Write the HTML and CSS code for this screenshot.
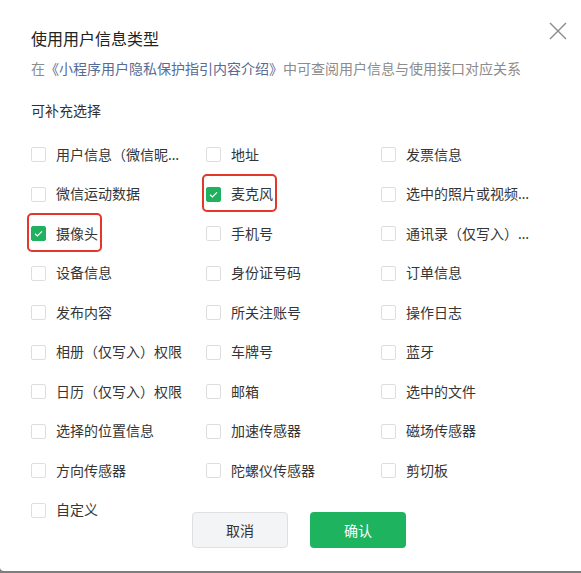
FILE: index.html
```html
<!DOCTYPE html>
<html lang="zh-CN">
<head>
<meta charset="utf-8">
<title>使用用户信息类型</title>
<link rel="stylesheet" href="styles.css">
</head>
<body>
<div class="dialog">
  <div class="header">
    <h1 class="title">使用用户信息类型</h1>
    <span class="close" aria-label="关闭">
      <svg width="18" height="18" viewBox="0 0 18 18"><path d="M1 1 L17 17 M17 1 L1 17" stroke="#8a8a8a" stroke-width="1.4" fill="none"/></svg>
    </span>
  </div>
  <p class="desc">在<a class="link">《小程序用户隐私保护指引内容介绍》</a>中可查阅用户信息与使用接口对应关系</p>
  <p class="section">可补充选择</p>
  <div class="grid">
    <label class="item"><span class="box"></span><span class="text">用户信息（微信昵称、头像）</span></label>
    <label class="item"><span class="box"></span><span class="text">地址</span></label>
    <label class="item"><span class="box"></span><span class="text">发票信息</span></label>

    <label class="item"><span class="box"></span><span class="text">微信运动数据</span></label>
    <label class="item marked"><span class="box checked"><svg width="15" height="15" viewBox="0 0 15 15"><path d="M4 7.8 L6.4 10 L11 5.3" stroke="#fff" stroke-width="1.2" fill="none"/></svg></span><span class="text">麦克风</span></label>
    <label class="item"><span class="box"></span><span class="text">选中的照片或视频信息</span></label>

    <label class="item marked"><span class="box checked"><svg width="15" height="15" viewBox="0 0 15 15"><path d="M4 7.8 L6.4 10 L11 5.3" stroke="#fff" stroke-width="1.2" fill="none"/></svg></span><span class="text">摄像头</span></label>
    <label class="item"><span class="box"></span><span class="text">手机号</span></label>
    <label class="item"><span class="box"></span><span class="text">通讯录（仅写入）权限</span></label>

    <label class="item"><span class="box"></span><span class="text">设备信息</span></label>
    <label class="item"><span class="box"></span><span class="text">身份证号码</span></label>
    <label class="item"><span class="box"></span><span class="text">订单信息</span></label>

    <label class="item"><span class="box"></span><span class="text">发布内容</span></label>
    <label class="item"><span class="box"></span><span class="text">所关注账号</span></label>
    <label class="item"><span class="box"></span><span class="text">操作日志</span></label>

    <label class="item"><span class="box"></span><span class="text">相册（仅写入）权限</span></label>
    <label class="item"><span class="box"></span><span class="text">车牌号</span></label>
    <label class="item"><span class="box"></span><span class="text">蓝牙</span></label>

    <label class="item"><span class="box"></span><span class="text">日历（仅写入）权限</span></label>
    <label class="item"><span class="box"></span><span class="text">邮箱</span></label>
    <label class="item"><span class="box"></span><span class="text">选中的文件</span></label>

    <label class="item"><span class="box"></span><span class="text">选择的位置信息</span></label>
    <label class="item"><span class="box"></span><span class="text">加速传感器</span></label>
    <label class="item"><span class="box"></span><span class="text">磁场传感器</span></label>

    <label class="item"><span class="box"></span><span class="text">方向传感器</span></label>
    <label class="item"><span class="box"></span><span class="text">陀螺仪传感器</span></label>
    <label class="item"><span class="box"></span><span class="text">剪切板</span></label>

    <label class="item"><span class="box"></span><span class="text">自定义</span></label>
  </div>
  <div class="footer">
    <button class="btn btn-cancel">取消</button>
    <button class="btn btn-ok">确认</button>
  </div>
</div>
</body>
</html>
```

FILE: styles.css
```css
html, body {
  margin: 0;
  padding: 0;
}
body {
  background: #7e7e7e;
  overflow: hidden;
  height: 573px;
  font-family: "Noto Sans CJK SC", "Noto Sans", sans-serif;
}
.dialog {
  width: 598px;
  height: 571px;
  background: #fff;
  border-radius: 0 0 4px 4px;
  box-sizing: border-box;
  padding: 22px 31px 0 31px;
}
.header {
  display: flex;
  justify-content: space-between;
  align-items: flex-start;
}
.title {
  margin: 5px 0 0 0;
  font-size: 16px;
  line-height: 22px;
  font-weight: normal;
  color: #222;
}
.close {
  display: block;
  width: 18px;
  height: 18px;
}
.close svg {
  display: block;
}
.desc {
  margin: 9px 0 0 0;
  font-size: 14px;
  line-height: 20px;
  color: #8c8c8c;
  white-space: nowrap;
}
.link {
  color: #576b95;
}
.section {
  margin: 22px 0 0 0;
  font-size: 14px;
  line-height: 20px;
  color: #333;
}
.grid {
  margin-top: 24.5px;
  display: grid;
  grid-template-columns: repeat(3, 175px);
  grid-auto-rows: 20px;
  row-gap: 19.5px;
}
.item {
  display: flex;
  align-items: center;
  gap: 10px;
  justify-self: start;
  position: relative;
  font-family: "Noto Sans", "Noto Sans CJK SC", sans-serif;
  font-size: 14px;
  line-height: 20px;
  color: #353535;
}
.box {
  width: 15px;
  height: 15px;
  box-sizing: border-box;
  border: 1px solid #dedede;
  border-radius: 2px;
  flex: none;
  background: #fff;
}
.box.checked {
  background: #1fb15e;
  border-color: #1fb15e;
}
.box svg {
  display: block;
  margin: -1px;
}
.text {
  max-width: 127px;
  white-space: nowrap;
  overflow: hidden;
  text-overflow: ellipsis;
}
.marked::after {
  content: "";
  position: absolute;
  left: -4.5px;
  right: -4px;
  top: -10.5px;
  height: 38.5px;
  box-sizing: border-box;
  border: 2px solid #e2372a;
  border-radius: 5px;
}
.footer {
  display: flex;
  justify-content: center;
  gap: 22px;
  margin-top: -8px;
}
.btn {
  width: 96px;
  height: 36px;
  border-radius: 4px;
  font-family: "Noto Sans CJK SC", "Noto Sans", sans-serif;
  font-size: 14px;
  padding: 0;
  cursor: pointer;
}
.btn-cancel {
  background: #f3f4f6;
  border: 1px solid #e0e0e0;
  color: #333;
}
.btn-ok {
  background: #1eb35f;
  border: none;
  color: #fff;
}
```
